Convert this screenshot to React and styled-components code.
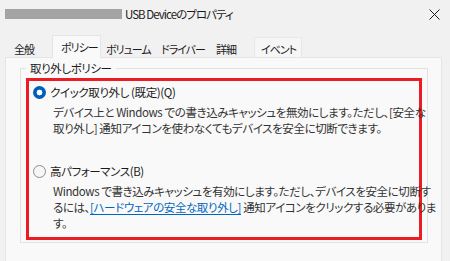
import React from 'react';
import styled, { createGlobalStyle } from 'styled-components';

const GlobalStyle = createGlobalStyle`
  html, body { margin: 0; padding: 0; background: #f1f1f1; overflow: hidden; }
  body {
    font-family: "Noto Sans CJK JP", "Noto Sans", sans-serif;
    font-feature-settings: "palt" 1;
    font-variant-east-asian: proportional-width;
    color: #1b1b1b;
    font-size: 11.5px;
    letter-spacing: -0.4px;
  }
  #root { width: 450px; height: 261px; overflow: hidden; }
`;

const Window = styled.div`
  display: flex;
  flex-direction: column;
  width: 450px;
  background: #f1f1f1;
  & > * { flex: none; }
`;

const TitleBar = styled.div`
  display: flex;
  align-items: center;
  height: 28px;
  padding: 0 10px 0 5px;
`;

const Redacted = styled.div`
  width: 117px;
  height: 10px;
  background: #a4a4a4;
  margin-right: 3px;
`;

const TitleText = styled.span`
  line-height: 16px;
  color: #1b1b1b;
  letter-spacing: -0.95px;
`;

const CloseButton = styled.div`
  margin-left: auto;
  display: flex;
  align-items: center;
`;

const TabStrip = styled.div`
  display: flex;
  align-items: flex-end;
  height: 23px;
  margin-top: 7px;
  margin-bottom: -1px;
  padding-left: 7px;
  position: relative;
  z-index: 1;
`;

const Tab = styled.div`
  box-sizing: border-box;
  flex: none;
  display: flex;
  align-items: center;
  width: ${p => p.$width + (p.$active ? 4 : 0)}px;
  height: ${p => (p.$active ? 23 : 20)}px;
  margin: 0 ${p => (p.$active ? -2 : 0)}px ${p => (p.$active ? 0 : 1)}px;
  padding: ${p => (p.$active ? '0 0 1px 8px' : '2px 0 0 6px')};
  font-size: 11px;
  line-height: 16px;
  letter-spacing: -1px;
  color: #1b1b1b;
  white-space: nowrap;
  background: ${p => (p.$active ? '#f9f9f9' : p.$hover ? '#f6f6f6' : 'transparent')};
  border: 1px solid ${p => (p.$active ? '#e5e5e5' : p.$hover ? '#e8e8e8' : 'transparent')};
  border-bottom: none;
`;

const Panel = styled.div`
  margin: 0 8px 0 5px;
  background: #f9f9f9;
  border: 1px solid #e5e5e5;
  padding: 2px 13px 20px 14px;
`;

const GroupBox = styled.fieldset`
  margin: 0;
  min-width: 0;
  border: 1px solid #e2e2e2;
  padding: 2px 5px 2px 5px;
`;

const GroupLabel = styled.legend`
  padding: 0 4px;
  line-height: 16px;
  color: #1b1b1b;
`;

const Highlight = styled.div`
  border: 3px solid #ec1c24;
  padding: 3px 4px 6px 4px;
`;

const Option = styled.div`
  margin-top: ${p => p.$gap || 0}px;
`;

const OptionHeader = styled.div`
  display: flex;
  align-items: center;
  gap: 4px;
  line-height: 16px;
  color: #1b1b1b;
`;

const Radio = styled.span`
  box-sizing: border-box;
  flex: none;
  width: 13px;
  height: 13px;
  border-radius: 50%;
  background: ${p =>
    p.$checked
      ? 'radial-gradient(circle, #ffffff 0 2.6px, #005fb8 3.2px)'
      : '#f6f6f6'};
  border: ${p => (p.$checked ? 'none' : '1px solid #8d8d8d')};
`;

const Description = styled.div`
  margin: 4px 0 0 20px;
  line-height: 16px;
  color: #333333;
  white-space: nowrap;
`;

const Link = styled.span`
  color: #0067c0;
  text-decoration: underline;
  text-underline-offset: 2px;
`;

const tabs = [
  { label: '全般', width: 47 },
  { label: 'ポリシー', width: 45, active: true },
  { label: 'ボリューム', width: 55 },
  { label: 'ドライバー', width: 55 },
  { label: '詳細', width: 45 },
  { label: 'イベント', width: 48, hover: true },
];

export default function App() {
  return (
    <>
      <GlobalStyle />
      <Window>
        <TitleBar>
          <Redacted />
          <TitleText>USB Deviceのプロパティ</TitleText>
          <CloseButton>
            <svg width="11" height="11" viewBox="0 0 11 11">
              <path d="M0.5 0.5 L10.5 10.5 M10.5 0.5 L0.5 10.5" stroke="#1b1b1b" strokeWidth="1" fill="none" />
            </svg>
          </CloseButton>
        </TitleBar>
        <TabStrip>
          {tabs.map(t => (
            <Tab key={t.label} $width={t.width} $active={t.active} $hover={t.hover}>
              {t.label}
            </Tab>
          ))}
        </TabStrip>
        <Panel>
          <GroupBox>
            <GroupLabel>取り外しポリシー</GroupLabel>
            <Highlight>
              <Option>
                <OptionHeader>
                  <Radio $checked />
                  <span>クイック取り外し (既定)(Q)</span>
                </OptionHeader>
                <Description>
                  デバイス上と Windows での書き込みキャッシュを無効にします。ただし、[安全な
                  <br />
                  取り外し] 通知アイコンを使わなくてもデバイスを安全に切断できます。
                </Description>
              </Option>
              <Option $gap={27}>
                <OptionHeader>
                  <Radio />
                  <span>高パフォーマンス(B)</span>
                </OptionHeader>
                <Description>
                  Windows で書き込みキャッシュを有効にします。ただし、デバイスを安全に切断す
                  <br />
                  るには、<Link>[ハードウェアの安全な取り外し]</Link> 通知アイコンをクリックする必要がありま
                  <br />
                  す。
                </Description>
              </Option>
            </Highlight>
          </GroupBox>
        </Panel>
      </Window>
    </>
  );
}
